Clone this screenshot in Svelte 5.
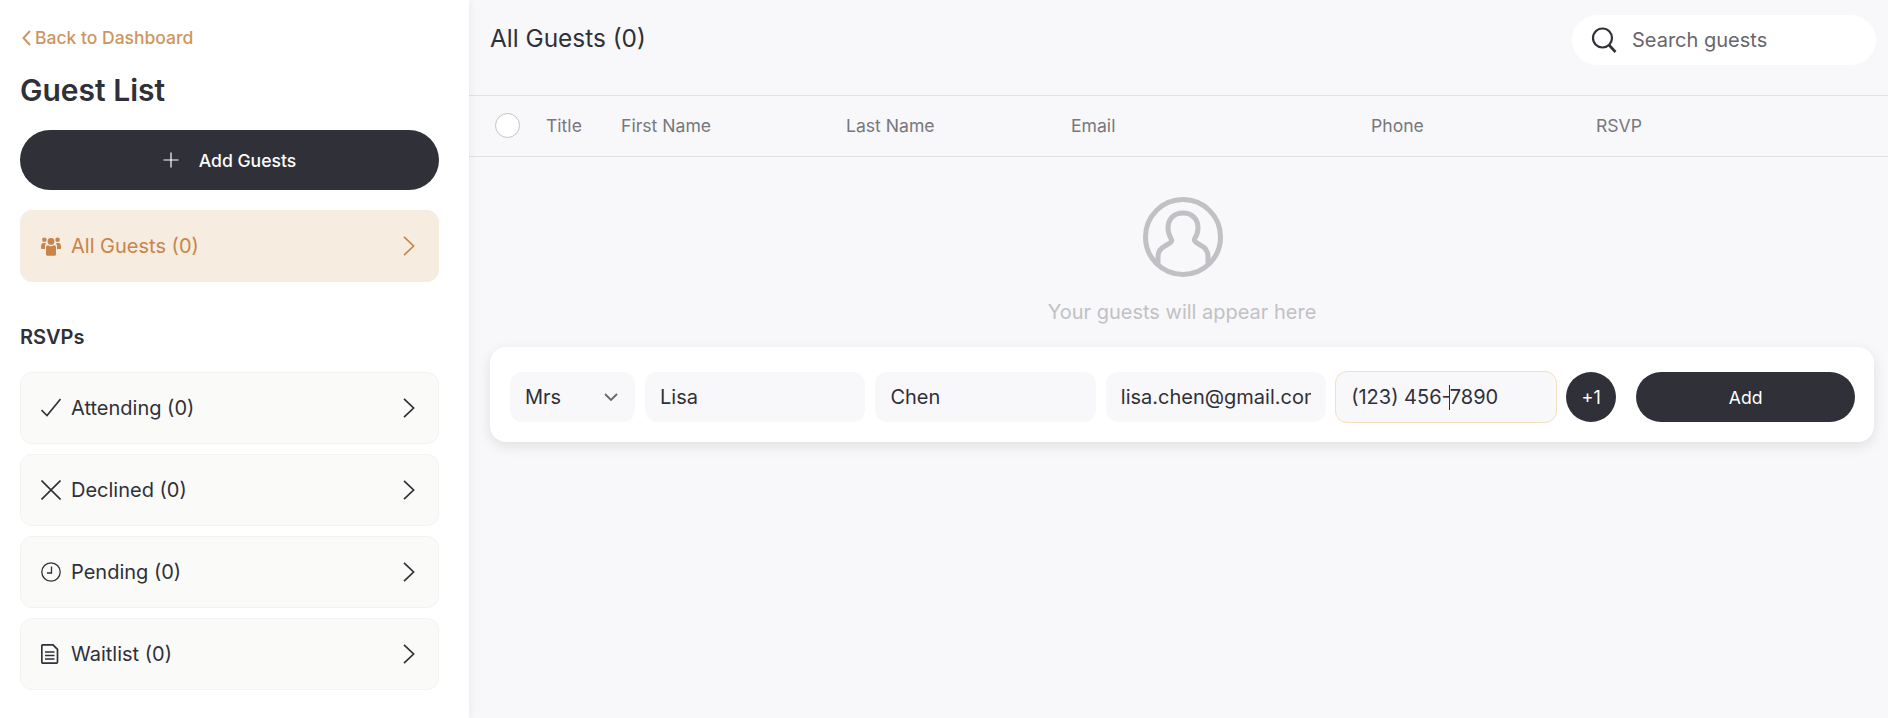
<script>
  const rsvps = [
    { label: 'Attending (0)', icon: 'check' },
    { label: 'Declined (0)', icon: 'cross' },
    { label: 'Pending (0)', icon: 'clock' },
    { label: 'Waitlist (0)', icon: 'list' }
  ];

  const columns = ['Title', 'First Name', 'Last Name', 'Email', 'Phone', 'RSVP'];
</script>

{#snippet chevron()}
  <svg class="chevron" viewBox="0 0 12 20" fill="none" stroke="currentColor" stroke-width="1.7">
    <path d="M1 0.8 10.6 10 1 19.2" />
  </svg>
{/snippet}

<div class="page">
  <aside class="sidebar">
    <a class="back" href="#back">
      <svg viewBox="0 0 9 16" width="9" height="16" fill="none" stroke="currentColor" stroke-width="2">
        <path d="M8 1 1.5 8 8 15" />
      </svg>
      Back to Dashboard
    </a>
    <h1>Guest List</h1>
    <button class="add-guests">
      <svg viewBox="0 0 16 16" width="16" height="16" fill="none" stroke="currentColor" stroke-width="1.2">
        <path d="M8 0.5v15M0.5 8h15" />
      </svg>
      Add Guests
    </button>

    <div class="nav-item active">
      <svg class="icon" viewBox="0 0 20 20" fill="currentColor">
        <circle cx="3.4" cy="3.8" r="2.3" />
        <circle cx="16.6" cy="3.8" r="2.3" />
        <circle cx="10" cy="5.4" r="3.4" />
        <path d="M0 10.5C0 8.5 1 7 2.5 7h2.7c-.8.8-1.2 2-1.2 3.3V13H1c-.6 0-1-.4-1-1zM20 10.5C20 8.5 19 7 17.5 7h-2.7c.8.8 1.2 2 1.2 3.3V13h3c.6 0 1-.4 1-1zM5 11.5C5 10 5.9 9.2 7 9.2c.8.6 1.9 1 3 1s2.2-.4 3-1c1.1 0 2 .8 2 2.3v6.8c0 .9-.7 1.500-1.500 1.500h-7C5.700 19.800 5 19.200 5 18.300z" />
      </svg>
      <span>All Guests (0)</span>
      {@render chevron()}
    </div>

    <h2>RSVPs</h2>
    <div class="rsvp-list">
      {#each rsvps as item}
        <div class="nav-item">
          <svg class="icon" viewBox="0 0 20 20" fill="none" stroke="currentColor" stroke-width="1.6">
            {#if item.icon === 'check'}
              <path d="M0.5 12 6 17.5 19.5 1" />
            {:else if item.icon === 'cross'}
              <path d="M0.5 0.5 19.5 19.5M19.5 0.5 0.5 19.5" />
            {:else if item.icon === 'clock'}
              <circle cx="10" cy="10" r="9.2" stroke-width="1.3" />
              <path d="M10.5 4.5V11H6" stroke-width="1.3" />
            {:else}
              <path d="M2 0.8h10l4.5 4.5V18a1.2 1.2 0 0 1-1.2 1.2H2A1.2 1.2 0 0 1 .8 18V2A1.2 1.2 0 0 1 2 .8zM4 8h9.5M4 11.5h9.5M4 15h9.5" stroke-width="1.7" />
            {/if}
          </svg>
          <span>{item.label}</span>
          {@render chevron()}
        </div>
      {/each}
    </div>
  </aside>

  <main>
    <header>
      <div class="title">All Guests (0)</div>
      <div class="search">
        <svg viewBox="0 0 26 26" width="26" height="26" fill="none" stroke="#2f3038" stroke-width="2.2">
          <circle cx="11.5" cy="11" r="9.5" />
          <path d="M18 18l6.5 7" stroke-width="2.6" />
        </svg>
        <span>Search guests</span>
      </div>
    </header>

    <div class="table-head">
      <span class="checkbox"></span>
      {#each columns as col}
        <span>{col}</span>
      {/each}
    </div>

    <div class="empty">
      <svg viewBox="0 0 80 80" width="80" height="80" fill="none" stroke="#c1c1c5" stroke-width="5">
        <circle cx="40" cy="40" r="37.5" />
        <path d="M15 69v-9c0-5 3-9 7-11l5-3c1.5-1 2-2 1.5-3.5C26 38 25 34 25 31c0-9 6-15 15-15s15 6 15 15c0 3-1 7-3.5 11-.5 1.5 0 2.5 1.5 3.5l5 3c4 2 7 6 7 11v9" />
      </svg>
      <p>Your guests will appear here</p>
    </div>

    <div class="add-row">
      <div class="field select">
        <span>Mrs</span>
        <svg viewBox="0 0 14 8" width="14" height="8" fill="none" stroke="#66666c" stroke-width="1.8">
          <path d="M1 1l6 6 6-6" />
        </svg>
      </div>
      <input class="field" value="Lisa" />
      <input class="field" value="Chen" />
      <input class="field" value="lisa.chen@gmail.com" />
      <div class="field phone">(123) 456-<span class="caret"></span>7890</div>
      <button class="plus-one">+1</button>
      <button class="add">Add</button>
    </div>
  </main>
</div>

<style>
  :global(body) {
    margin: 0;
    background: #f8f8fa;
  }

  .page {
    display: flex;
    height: 718px;
    overflow: hidden;
    font-family: Inter, "Liberation Sans", sans-serif;
    color: #2f3038;
  }

  .sidebar {
    flex: 0 0 429px;
    height: 718px;
    padding: 0 20px;
    background: #fff;
    box-shadow: 0 0 10px rgba(0, 0, 0, 0.08);
    z-index: 1;
  }

  .back {
    display: flex;
    align-items: center;
    gap: 4px;
    margin: 26px 0 0 2px;
    height: 24px;
    font-size: 17.5px;
    font-weight: 500;
    line-height: 24px;
    color: #cd955f;
    text-decoration: none;
  }

  h1 {
    margin: 22px 0;
    font-size: 30px;
    font-weight: 600;
    line-height: 36px;
  }

  .add-guests {
    display: flex;
    align-items: center;
    justify-content: center;
    gap: 20px;
    width: 419px;
    height: 60px;
    border: 0;
    border-radius: 30px;
    background: #2f3038;
    color: #fff;
    font: 500 17.6px Inter, sans-serif;
  }

  .nav-item {
    display: flex;
    align-items: center;
    box-sizing: border-box;
    width: 419px;
    height: 72px;
    padding: 0 23px 0 20px;
    border: 1px solid #f3f3f1;
    border-radius: 12px;
    background: #fafaf8;
    font-size: 20px;
    color: #2f3038;
  }

  .nav-item span {
    flex: 1;
    margin-left: 10px;
  }

  .nav-item.active {
    margin-top: 20px;
    background: #f6ece0;
    border-color: #f6ece0;
    color: #c6854d;
  }

  .icon {
    width: 20px;
    height: 20px;
    flex: none;
  }

  .chevron {
    width: 12px;
    height: 20px;
    flex: none;
  }

  h2 {
    margin: 43px 0 23px;
    font-size: 20px;
    font-weight: 600;
    line-height: 24px;
  }

  .rsvp-list {
    display: flex;
    flex-direction: column;
    gap: 10px;
  }

  main {
    flex: 1;
    min-width: 0;
  }

  header {
    display: flex;
    justify-content: space-between;
    align-items: flex-start;
    box-sizing: border-box;
    height: 96px;
    padding: 15px 12px 0 21px;
    border-bottom: 1px solid #e2e2e5;
  }

  .title {
    margin-top: 8px;
    font-size: 24.4px;
    line-height: 30px;
  }

  .search {
    display: flex;
    align-items: center;
    gap: 15px;
    box-sizing: border-box;
    width: 304px;
    height: 50px;
    padding-left: 19px;
    border-radius: 25px;
    background: #fff;
    font-size: 20px;
    color: #66666c;
  }

  .table-head {
    display: grid;
    grid-template-columns: 51px 75px 225px 225px 300px 225px 1fr;
    align-items: center;
    height: 61px;
    box-sizing: border-box;
    padding: 0 0 2px 26px;
    border-bottom: 1px solid #e2e2e5;
    font-size: 17.6px;
    color: #77777d;
  }

  .checkbox {
    width: 25px;
    height: 25px;
    box-sizing: border-box;
    border: 1px solid #c4c4c8;
    border-radius: 50%;
    background: #fff;
  }

  .empty {
    display: flex;
    flex-direction: column;
    align-items: center;
    height: 190px;
    padding-top: 40px;
    box-sizing: border-box;
    margin-left: 7px;
  }

  .empty svg {
    margin-left: 1px;
  }

  .empty p {
    margin: 22px 0 0;
    font-size: 20px;
    line-height: 26px;
    color: #c1c1c5;
  }

  .add-row {
    display: flex;
    align-items: center;
    gap: 10px;
    box-sizing: border-box;
    height: 95px;
    margin: 0 14px 0 21px;
    padding: 5px 19px 0 20px;
    border-radius: 16px;
    background: #fff;
    box-shadow: 0 4px 14px rgba(0, 0, 0, 0.1);
  }

  .field {
    flex: none;
    box-sizing: border-box;
    width: 220.4px;
    height: 50px;
    padding: 0 15px;
    border: 0;
    border-radius: 12px;
    outline: 0;
    background: #f8f8fa;
    font: 400 20px Inter, sans-serif;
    color: #2f3038;
  }

  .select {
    display: flex;
    align-items: center;
    justify-content: space-between;
    width: 125px;
    padding-right: 17px;
  }

  .phone {
    display: flex;
    align-items: center;
    white-space: pre;
    width: 222px;
    height: 52px;
    margin: 0 -1px;
    border: 1px solid #f6dfbd;
  }

  .caret {
    width: 1px;
    height: 25px;
    margin-left: -2px;
    background: #2f3038;
  }

  .plus-one {
    flex: none;
    width: 50px;
    height: 50px;
    border: 0;
    padding: 0;
    border-radius: 50%;
    background: #2f3038;
    color: #fff;
    font: 400 18px Inter, sans-serif;
  }

  .add {
    flex: none;
    width: 219px;
    height: 50px;
    margin-left: 10px;
    border: 0;
    border-radius: 25px;
    background: #2f3038;
    color: #fff;
    font: 400 17.6px Inter, sans-serif;
  }
</style>
